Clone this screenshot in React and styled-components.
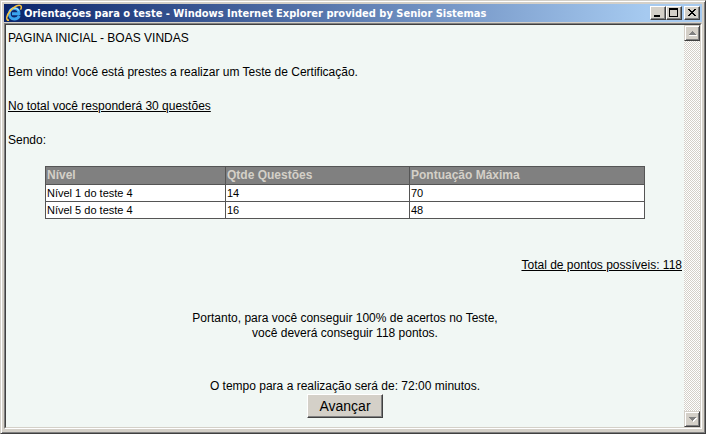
import React from 'react';
import styled, { createGlobalStyle } from 'styled-components';

const GlobalStyle = createGlobalStyle`
  * {
    box-sizing: border-box;
  }

  body {
    margin: 0;
    font-family: "Liberation Sans", Arial, sans-serif;
    font-size: 12px;
    line-height: 15px;
    color: #000;
  }
`;

// Outer window frame with the raised classic border
const Window = styled.div`
  min-height: 100vh;
  display: flex;
  flex-direction: column;
  padding: 2px;
  background: #d4d0c8;
  border: 1px solid;
  border-color: #d4d0c8 #404040 #404040 #d4d0c8;
  box-shadow: inset 1px 1px 0 #fff, inset -1px -1px 0 #808080;
`;

const TitleBar = styled.header`
  display: flex;
  align-items: center;
  height: 18px;
  margin: 1px 1px 0;
  padding: 0 2px 0 1px;
  background: linear-gradient(to right, #0a246a, #a6caf0 92%);

  h1 {
    flex: 1;
    margin: 0;
    padding: 2px 0 0 1px;
    font: bold 11px/16px "DejaVu Sans Condensed", Tahoma, sans-serif;
    color: #fff;
    white-space: nowrap;
    overflow: hidden;
  }
`;

const RaisedButton = styled.button`
  display: flex;
  align-items: center;
  justify-content: center;
  padding: 0;
  color: #000;
  background: #d4d0c8;
  border: 1px solid;
  border-color: #fff #404040 #404040 #fff;
  box-shadow: inset -1px -1px 0 #808080;
`;

const CaptionButton = styled(RaisedButton)`
  width: 16px;
  height: 14px;
  margin-left: ${({ $spaced }) => ($spaced ? '2px' : '0')};
`;

const ScrollButton = styled(RaisedButton)`
  width: 16px;
  height: 16px;
  border-color: #d4d0c8 #404040 #404040 #d4d0c8;
  box-shadow: inset 1px 1px 0 #fff, inset -1px -1px 0 #808080;
`;

// Sunken area that holds the page and its scrollbar
const Viewport = styled.div`
  flex: 1;
  display: flex;
  margin: 1px 1px 2px;
  border: 1px solid;
  border-color: #808080 #fff #fff #808080;
`;

const Sunken = styled.div`
  flex: 1;
  display: flex;
  border: 1px solid;
  border-color: #404040 #d4d0c8 #d4d0c8 #404040;
`;

const Page = styled.main`
  flex: 1;
  min-width: 0;
  padding: 5px 2px 8px;
  background: #f1f7f4;
`;

const ScrollTrack = styled.div`
  display: flex;
  flex-direction: column;
  justify-content: space-between;
  width: 16px;
  background: repeating-conic-gradient(#d4d0c8 0 25%, #fff 0 50%) 0 0 / 2px 2px;
`;

const Text = styled.p`
  margin: 0 0 17px;
  line-height: 17px;
`;

const Total = styled.p`
  margin: 39px 0 38px;
  text-align: right;
`;

const Note = styled.p`
  margin: 0 0 38px;
  text-align: center;
`;

const Levels = styled.table`
  width: 600px;
  max-width: 100%;
  margin: 0 auto;
  border-collapse: collapse;
  table-layout: fixed;
  background: #fff;

  th,
  td {
    padding: 1px;
    border: 1px solid #555;
    text-align: left;
  }

  th {
    background: #808080;
    color: #d4d0c8;
    font-size: 12px;
    line-height: 15px;
  }

  td {
    font-size: 11px;
    line-height: 14px;
  }

  th:nth-child(1) {
    width: 180px;
  }

  th:nth-child(2) {
    width: 184px;
  }
`;

const Footer = styled.footer`
  display: flex;
  flex-direction: column;
  align-items: center;
`;

const NextButton = styled(RaisedButton)`
  height: 24px;
  padding: 0 11px;
  font-family: inherit;
  font-size: 14px;
`;

const levels = [
  { name: 'Nível 1 do teste 4', questions: 14, points: 70 },
  { name: 'Nível 5 do teste 4', questions: 16, points: 48 },
];

const BrowserIcon = () => (
  <svg width="18" height="18" viewBox="0 0 18 18" fill="none" aria-hidden="true">
    <path d="M14.3 11.800C13.300 14 11.500 15 9.300 15C6.200 15 4.300 12.700 4.300 9.800C4.300 6.600 6.500 4.500 9.500 4.500C12.500 4.500 14.300 6.700 14 9.700H7" stroke="#3aa5ee" strokeWidth="2.900" />
    <path d="M4.300 9.500C4.500 6.300 6.700 4.200 9.800 4.200C11.700 4.200 13 5 13.700 6.500" stroke="#a5e0ff" strokeWidth="1.200" />
    <path d="M4 16.300C.3 16.500 1.500 11 5.500 6.500C9 2.500 14 .2 15.800 1.800C16.700 2.700 16.400 4.200 15.500 5.700" stroke="#f8c440" strokeWidth="1.500" />
  </svg>
);

const App = () => {
  return (
    <>
      <GlobalStyle />
      <Window>
        <TitleBar>
          <BrowserIcon />
          <h1>Orientações para o teste - Windows Internet Explorer provided by Senior Sistemas</h1>
          <CaptionButton type="button" aria-label="Minimizar">
            <svg width="12" height="10" viewBox="0 0 12 10" shapeRendering="crispEdges">
              <path d="M2 7h6v2H2z" />
            </svg>
          </CaptionButton>
          <CaptionButton type="button" aria-label="Maximizar">
            <svg width="12" height="10" viewBox="0 0 12 10" shapeRendering="crispEdges">
              <path fillRule="evenodd" d="M1 0h9v9H1zM2 2v6h7V2z" />
            </svg>
          </CaptionButton>
          <CaptionButton type="button" aria-label="Fechar" $spaced>
            <svg width="12" height="10" viewBox="0 0 12 10" shapeRendering="crispEdges">
              <path d="M2 1h2v1h1v1h2V2h1V1h2v1H9v1H8v1H7v1h1v1h1v1h1v1H8V7H7V6H5v1H4v1H2V7h1V6h1V5h1V4H4V3H3V2H2z" />
            </svg>
          </CaptionButton>
        </TitleBar>
        <Viewport>
          <Sunken>
            <Page>
              <Text>PAGINA INICIAL - BOAS VINDAS</Text>
              <Text>Bem vindo! Você está prestes a realizar um Teste de Certificação.</Text>
              <Text><u>No total você responderá 30 questões</u></Text>
              <Text>Sendo:</Text>
              <Levels>
                <thead>
                  <tr>
                    <th>Nível</th>
                    <th>Qtde Questões</th>
                    <th>Pontuação Máxima</th>
                  </tr>
                </thead>
                <tbody>
                  {levels.map((level) => (
                    <tr key={level.name}>
                      <td>{level.name}</td>
                      <td>{level.questions}</td>
                      <td>{level.points}</td>
                    </tr>
                  ))}
                </tbody>
              </Levels>
              <Total><u>Total de pontos possíveis: 118</u></Total>
              <Note>
                Portanto, para você conseguir 100% de acertos no Teste,
                <br />
                você deverá conseguir 118 pontos.
              </Note>
              <Footer>
                <span>O tempo para a realização será de: 72:00 minutos.</span>
                <NextButton type="button">Avançar</NextButton>
              </Footer>
            </Page>
            <ScrollTrack>
              <ScrollButton type="button" aria-label="Rolar para cima">
                <svg width="9" height="6" viewBox="0 0 9 6" shapeRendering="crispEdges">
                  <path fill="#fff" d="M1 5h8v1H1z" />
                  <path fill="#808080" d="M4 1h1v1h1v1h1v1h1v1H1V4h1V3h1V2h1z" />
                </svg>
              </ScrollButton>
              <ScrollButton type="button" aria-label="Rolar para baixo">
                <svg width="9" height="6" viewBox="0 0 9 6" shapeRendering="crispEdges">
                  <path fill="#fff" d="M2 2h7v1H8v1H7v1H6v1H5V5H4V4H3V3H2z" />
                  <path fill="#808080" d="M1 1h7v1H7v1H6v1H5v1H4V4H3V3H2V2H1z" />
                </svg>
              </ScrollButton>
            </ScrollTrack>
          </Sunken>
        </Viewport>
      </Window>
    </>
  );
};

export default App;
